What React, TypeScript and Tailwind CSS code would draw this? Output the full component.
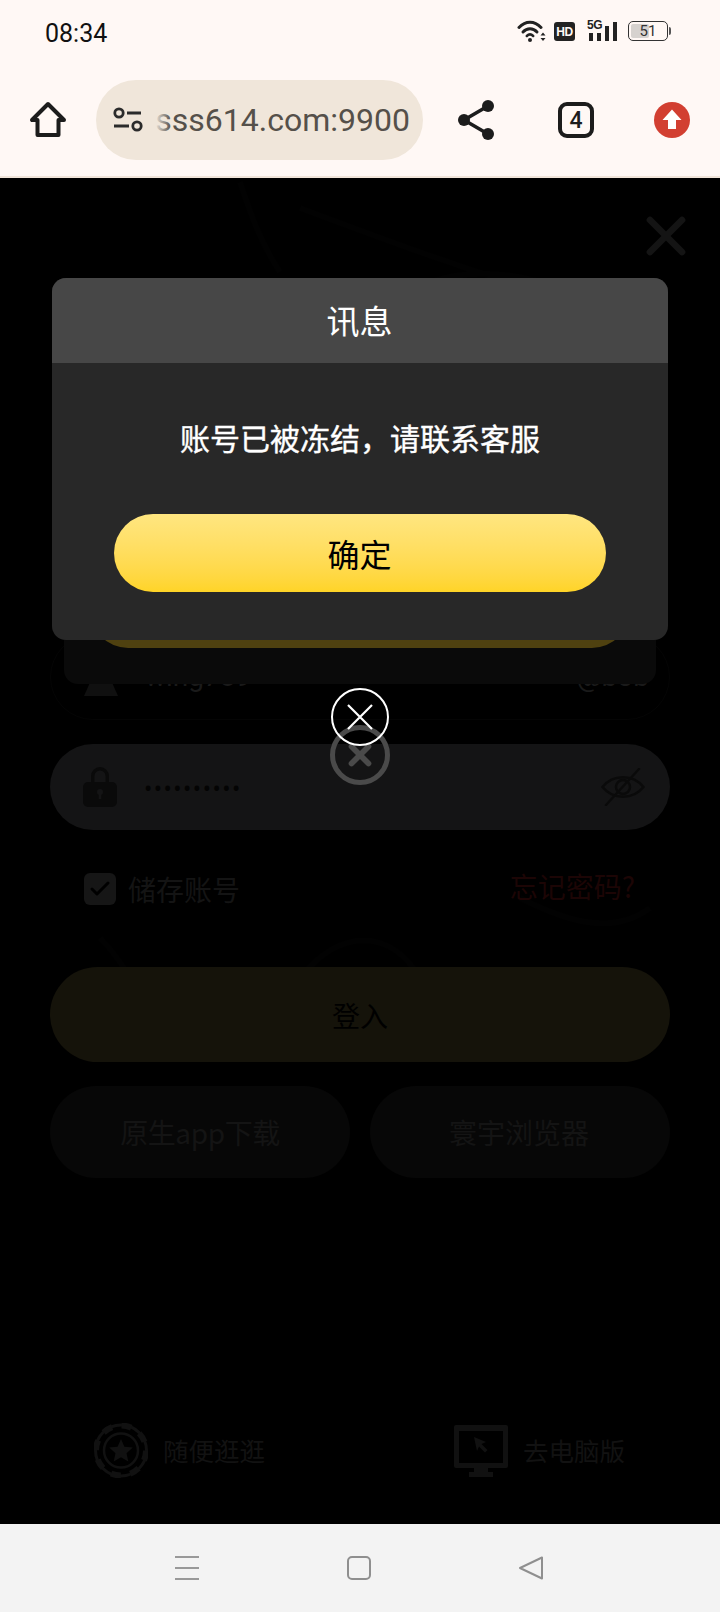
import { Check, X } from "lucide-react";

const FONT = "font-['Noto_Sans_CJK_SC','Noto_Sans',sans-serif]";

function StatusIcons() {
  return (
    <div className="flex h-[24px] items-end text-[#222]">
      <svg width="29" height="24" viewBox="0 0 29 24" fill="none" stroke="currentColor" strokeLinecap="round">
        <path d="M2 8.500C8.500 1.500 17.500 1.500 24 8.500" strokeWidth="3" />
        <path d="M6 13C10 8.800 16 8.800 20 13" strokeWidth="3" />
        <path d="M9.800 17C11.800 15 14.200 15 16.200 17" strokeWidth="2.500" />
        <circle cx="13" cy="21" r="2" fill="currentColor" stroke="none" />
        <path d="M23.500 16.500h5L26 13.500zM23.500 19h5L26 22z" fill="currentColor" stroke="none" />
      </svg>
      <div className="mb-[2px] ml-[8px] flex h-[19px] w-[21px] items-center justify-center rounded-[3px] bg-[#222] font-['Liberation_Sans',sans-serif] text-[12px] leading-none font-bold tracking-[-0.5px] text-[#fff8f5]">
        HD
      </div>
      <div className="relative mb-[2px] ml-[14px] flex items-end gap-[4px]">
        <span className="absolute top-[-3px] left-[-2px] font-['Liberation_Sans',sans-serif] text-[12px] leading-none font-bold tracking-[-0.5px]">5G</span>
        <div className="h-[8px] w-[4px] bg-[#222]" />
        <div className="h-[8px] w-[4px] bg-[#222]" />
        <div className="h-[15px] w-[4px] bg-[#222]" />
        <div className="h-[19px] w-[4px] bg-[#222]" />
      </div>
      <div className="mb-[2px] ml-[11px] flex items-center">
        <div className="relative flex h-[20px] w-[40px] items-center justify-center overflow-hidden rounded-[5px] border border-[#333]">
          <div className="absolute inset-y-[2px] left-[2px] w-[18px] rounded-[2px] bg-[#d6d2cf]" />
          <span className="relative font-['Roboto',sans-serif] text-[15px] leading-none text-[#333]">51</span>
        </div>
        <div className="ml-[1px] h-[8px] w-[2px] rounded-r bg-[#555]" />
      </div>
    </div>
  );
}

function BrowserBar() {
  return (
    <div className="flex h-[98px] items-start border-b-2 border-[#f1e5da] bg-[#fff8f5]">
      <div className="flex w-[96px] justify-center pt-[21px] pr-[1px]">
        <svg width="38" height="38" viewBox="0 0 38 38" fill="none" stroke="#1c1c1c" strokeWidth="4" strokeLinejoin="round">
          <path d="M19 3 3 19h5.500v15h21V19H35z" />
        </svg>
      </div>
      <div className="flex h-[80px] w-[327px] items-center rounded-full bg-[#f0e6da] pl-[17px]">
        <svg className="shrink-0" width="30" height="26" viewBox="0 0 30 26" fill="none" stroke="#2b2b2b" strokeWidth="2.800">
          <circle cx="6" cy="6" r="4.200" />
          <path d="M14 6h14M1 19h15" />
          <circle cx="24" cy="19" r="4.200" />
        </svg>
        <div className="relative ml-[12px] flex w-[255px] justify-end overflow-hidden">
          <span className="font-['Roboto',sans-serif] text-[32px] leading-[40px] whitespace-nowrap text-[#55504a]">
            sss614.com:9900
          </span>
          <div className="absolute inset-y-0 left-0 w-[16px] bg-gradient-to-r from-[#f0e6da] to-[#f0e6da00]" />
        </div>
      </div>
      <div className="flex flex-1 items-start pt-[20px]">
        <div className="flex w-[106px] justify-center">
          <svg width="38" height="40" viewBox="0 0 38 40" fill="#1c1c1c" stroke="#1c1c1c">
            <path d="M7 20 31 6M7 20l24 14" strokeWidth="3.600" fill="none" />
            <circle cx="7" cy="20" r="6" stroke="none" />
            <circle cx="31" cy="6" r="6" stroke="none" />
            <circle cx="31" cy="34" r="6" stroke="none" />
          </svg>
        </div>
        <div className="flex w-[94px] justify-center pt-[2px]">
          <div className="flex h-[36px] w-[36px] items-center justify-center rounded-[9px] border-4 border-[#1c1c1c] font-['Roboto',sans-serif] text-[23px] leading-none font-medium text-[#1c1c1c]">
            4
          </div>
        </div>
        <div className="flex flex-1 justify-center pt-[2px]">
          <svg width="36" height="36" viewBox="0 0 36 36">
            <circle cx="18" cy="18" r="18" fill="#d23f31" />
            <path d="M18 7.500 8.500 18H14v9h8v-9h5.500z" fill="#fff" />
          </svg>
        </div>
      </div>
    </div>
  );
}

function ChipIcon() {
  return (
    <svg width="54" height="55" viewBox="0 0 54 55" fill="none" stroke="#111">
      <circle cx="27" cy="27.500" r="25.500" strokeWidth="3" />
      <circle cx="27" cy="27.500" r="25" strokeWidth="6" strokeDasharray="10 9.600" />
      <circle cx="27" cy="27.500" r="17" strokeWidth="2.500" />
      <path d="m27 16 3.400 7.800 8.400.8-6.300 5.600 1.800 8.300-7.300-4.300-7.300 4.300 1.800-8.300-6.300-5.600 8.400-.8z" fill="#111" stroke="none" />
    </svg>
  );
}

function MonitorIcon() {
  return (
    <svg width="54" height="52" viewBox="0 0 54 52">
      <path fillRule="evenodd" d="M2 0h50a2 2 0 0 1 2 2v39a2 2 0 0 1-2 2H2a2 2 0 0 1-2-2V2a2 2 0 0 1 2-2zm3 6v32h44V6z" fill="#111" />
      <path d="M20 43h14v4h5v5H15v-5h5z" fill="#111" />
      <path d="m20 12 12 5-4.500 2 6 6-2.500 2.500-6-6L23 26z" fill="#111" />
    </svg>
  );
}

function PersonIcon() {
  return (
    <svg className="mt-[-6px]" width="34" height="44" viewBox="0 0 34 44" fill="#101010">
      <circle cx="17" cy="12" r="11" />
      <path d="M8 26h18l8 18H0z" />
    </svg>
  );
}

function LockIcon() {
  return (
    <svg width="34" height="40" viewBox="0 0 34 40">
      <path d="M8 16V9a9 9 0 0 1 18 0v7h-3.500V9a5.500 5.500 0 0 0-11 0v7z" fill="#0a0a0a" />
      <rect y="15" width="34" height="25" rx="5" fill="#0a0a0a" />
      <circle cx="17" cy="25" r="3" fill="#141415" />
      <rect x="15.800" y="26" width="2.400" height="6" fill="#141415" />
    </svg>
  );
}

function SlashedEyeIcon() {
  return (
    <svg width="44" height="38" viewBox="0 0 44 38" fill="none" stroke="#0a0a0a" strokeWidth="2.500" strokeLinecap="round">
      <path d="M1.500 19C12 6 32 6 42.500 19 32 32 12 32 1.500 19z" />
      <circle cx="22" cy="19" r="7" />
      <path d="M38 1 5 37" />
    </svg>
  );
}

function BackgroundTexture() {
  return (
    <svg className="absolute inset-0" width="720" height="1346" viewBox="0 0 720 1346" fill="none" stroke="#020202" strokeWidth="6">
      <path d="M240 4c10 30 20 60 40 90M300 30c80 30 160 60 260 90M430 104c60-20 120 0 170 20" />
      <path d="M100 760c20 20 30 40 40 60M300 800c40-50 90-50 120 0M520 720c40 20 90 40 130 10" />
    </svg>
  );
}

function LoginPage() {
  return (
    <div className="relative flex h-full flex-col px-[50px]">
      <div className="flex justify-end pt-[26px]">
        <X className="mr-[-28px] text-[#141414]" size={64} strokeWidth={2.500} />
      </div>
      <div className="mt-[366px] flex h-[86px] items-center rounded-full border border-[#050505] pr-[20px] pl-[33px]">
        <PersonIcon />
        <span className="ml-[27px] flex-1 font-['Roboto',sans-serif] text-[28px] leading-[32px] text-[#1a1a1a]">wing789</span>
        <span className="font-['Roboto',sans-serif] text-[28px] leading-[32px] text-[#1a1a1a]">@bob</span>
      </div>
      <div className="mt-[24px] flex h-[86px] items-center rounded-full bg-[#141415] pr-[25px] pl-[33px]">
        <LockIcon />
        <span className="ml-[27px] flex-1 text-[22px] leading-none tracking-[1.500px] text-[#040404]">••••••••••</span>
        <SlashedEyeIcon />
      </div>
      <div className={`mt-[43px] flex h-[32px] items-center pr-[35px] pl-[34px] ${FONT}`}>
        <div className="flex h-[32px] w-[32px] items-center justify-center rounded-[6px] bg-[#161616]">
          <Check className="text-[#000]" size={24} strokeWidth={3} />
        </div>
        <span className="ml-[12px] flex-1 text-[28px] leading-none text-[#141414]">储存账号</span>
        <span className="mb-[6px] text-[28px] leading-none text-[#1c0505]">忘记密码?</span>
      </div>
      <div className={`mt-[62px] flex h-[95px] items-center justify-center rounded-full bg-[#15130a] text-[28px] text-black ${FONT}`}>
        登入
      </div>
      <div className={`mt-[24px] grid h-[92px] grid-cols-2 gap-[20px] text-[28px] text-[#141414] ${FONT}`}>
        <div className="flex items-center justify-center rounded-full bg-[#070707] tracking-[-0.4px]">原生app下载</div>
        <div className="flex items-center justify-center rounded-full bg-[#070707] pr-[2px]">寰宇浏览器</div>
      </div>
      <div className={`mt-[245px] flex justify-between pr-[45px] pl-[44px] text-[25.5px] text-[#121212] ${FONT}`}>
        <div className="flex items-center gap-[15px]">
          <ChipIcon />
          <span>随便逛逛</span>
        </div>
        <div className="flex items-center gap-[15px]">
          <MonitorIcon />
          <span>去电脑版</span>
        </div>
      </div>
    </div>
  );
}

function BehindDialog() {
  return (
    <div className="absolute inset-0 flex flex-col items-center">
      <div className="mt-[122px] flex h-[384px] w-[592px] flex-col items-center justify-end rounded-[14px] bg-[#0a0a0a] pb-[36px]">
        <div className="h-[76px] w-[540px] rounded-full bg-[#4f4110]" />
      </div>
      <div className="mt-[41px] flex h-[60px] w-[60px] items-center justify-center rounded-full border-[5px] border-[#4a4a4a]">
        <X className="text-[#4a4a4a]" size={34} strokeWidth={4} />
      </div>
    </div>
  );
}

function MessageDialog() {
  return (
    <div className={`absolute inset-0 flex flex-col items-center ${FONT}`}>
      <div className="mt-[100px] w-[616px] overflow-hidden rounded-[14px] bg-[#282828]">
        <div className="flex h-[85px] items-center justify-center bg-[#474747] pr-[1px] text-[33px] text-white">讯息</div>
        <div className="flex h-[151px] items-center justify-center pb-[3px] text-[30px] text-white [-webkit-text-stroke:0.4px_#fff]">
          账号已被冻结，请联系客服
        </div>
        <div className="flex justify-center pb-[48px]">
          <div className="flex h-[78px] w-[492px] items-center justify-center rounded-full bg-gradient-to-b from-[#ffe680] to-[#ffd426] pr-[1px] text-[32px] text-black">
            确定
          </div>
        </div>
      </div>
      <div className="mt-[48px] flex h-[58px] w-[58px] items-center justify-center rounded-full border-2 border-white">
        <svg width="28" height="28" viewBox="0 0 28 28" stroke="#fff" strokeWidth="2.200">
          <path d="M2 2l24 24M26 2 2 26" />
        </svg>
      </div>
    </div>
  );
}

function NavBar() {
  return (
    <div className="flex h-[88px] items-start bg-[#f3f3f3] pt-[32px]">
      <div className="flex w-[347px] justify-start pl-[175px]">
        <div className="flex h-[24px] w-[24px] flex-col justify-between">
          <div className="h-[2px] bg-[#999]" />
          <div className="h-[2px] bg-[#999]" />
          <div className="h-[2px] bg-[#999]" />
        </div>
      </div>
      <div className="h-[24px] w-[24px] rounded-[5px] border-2 border-[#8f8f8f]" />
      <div className="ml-[148px]">
        <svg width="24" height="24" viewBox="0 0 24 24" fill="none" stroke="#8f8f8f" strokeWidth="2" strokeLinejoin="round">
          <path d="M23 1.500v21L1 12z" />
        </svg>
      </div>
    </div>
  );
}

export default function App() {
  return (
    <div className="flex h-[1612px] w-[720px] flex-col overflow-hidden bg-black">
      <div className="flex h-[80px] items-start justify-between bg-[#fff8f5] pt-[19px] pr-[49px] pl-[45px]">
        <span className="font-['Roboto',sans-serif] text-[25px] leading-[30px] text-[#111]">08:34</span>
        <StatusIcons />
      </div>
      <BrowserBar />
      <div className="relative flex-1 overflow-hidden bg-black">
        <BackgroundTexture />
        <LoginPage />
        <BehindDialog />
        <MessageDialog />
      </div>
      <NavBar />
    </div>
  );
}
